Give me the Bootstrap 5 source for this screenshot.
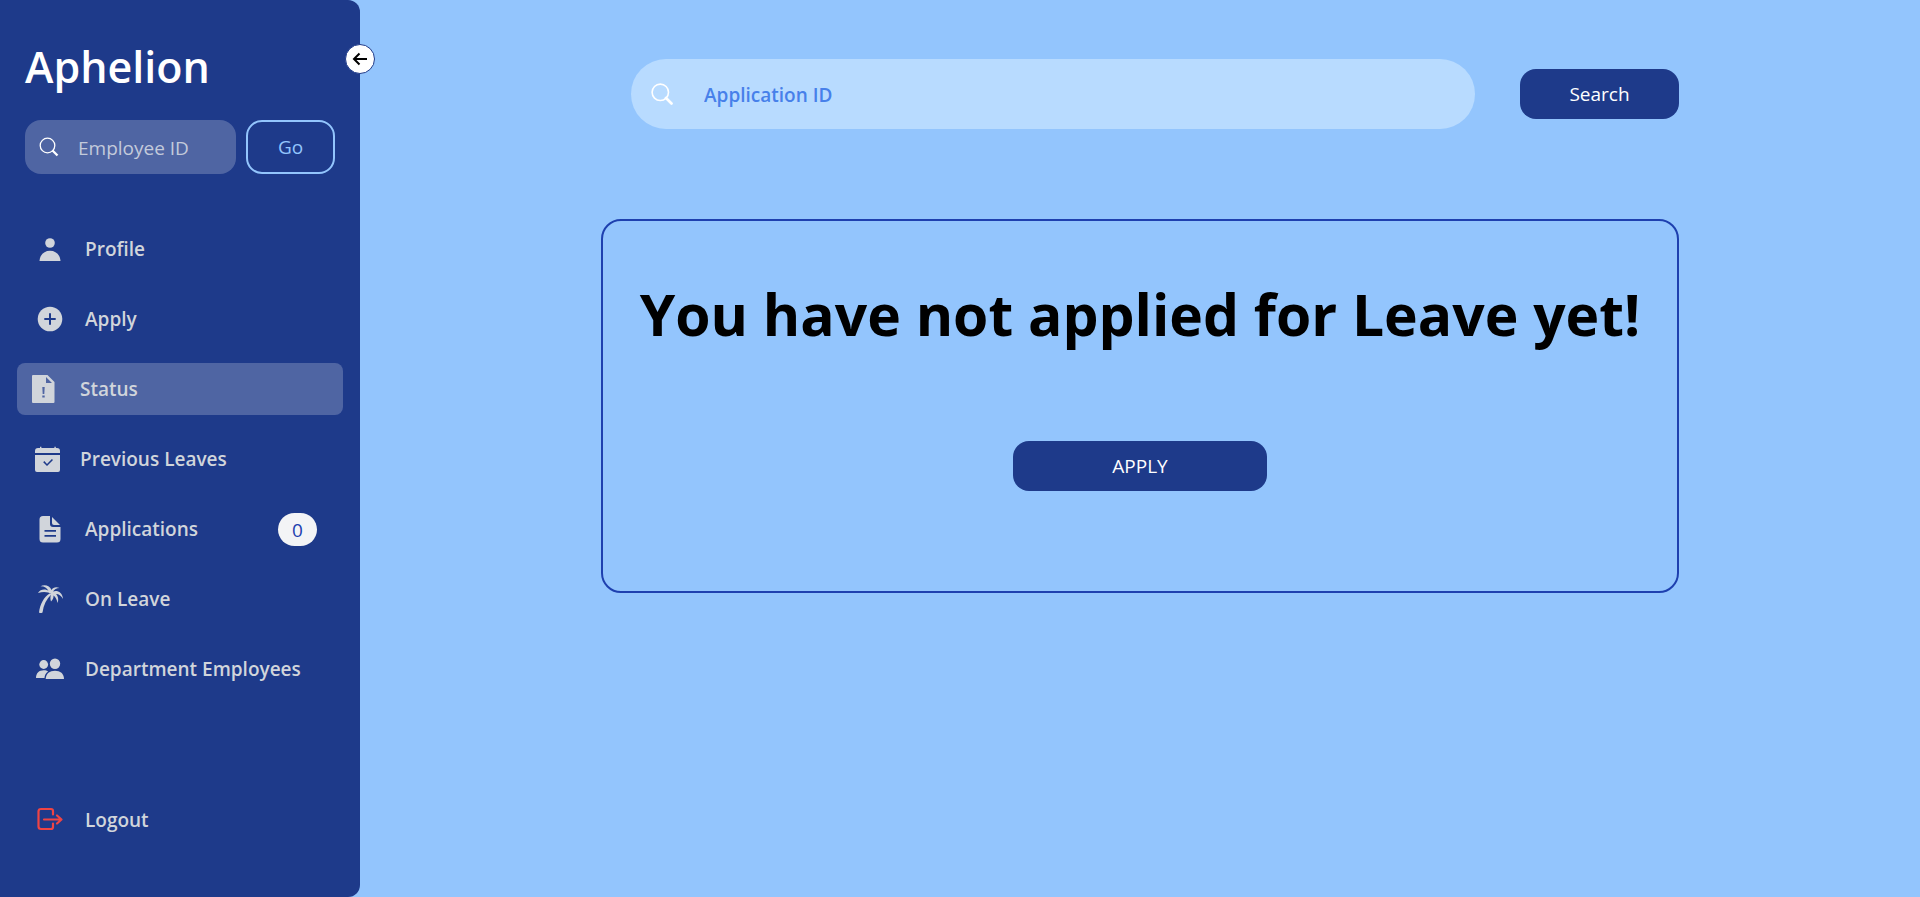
<!DOCTYPE html>
<html lang="en">
<head>
<meta charset="utf-8">
<meta name="viewport" content="width=device-width, initial-scale=1">
<title>Aphelion</title>
<link href="https://cdn.jsdelivr.net/npm/bootstrap@5.3.0/dist/css/bootstrap.min.css" rel="stylesheet">
<style>
  :root {
    --navy: #1e3a8a;
    --sky: #93c5fd;
    --soft: #d1d5db;
  }
  body {
    background: var(--sky);
    color: #000;
    font-family: "Open Sans", "Noto Sans", sans-serif;
    font-size: 19px;
    line-height: 28px;
  }
  .sidebar {
    width: 360px;
    background: var(--navy);
    border-radius: 0 12px 12px 0;
    padding: 36px 17px 51px;
  }
  .brand {
    font-size: 43px;
    line-height: 62px;
    font-weight: 600;
    padding-left: 8px;
    margin-bottom: 22px;
  }
  .toggle {
    top: 44px;
    right: -15px;
    width: 30px;
    height: 30px;
    background: #fff;
    border: 1px solid var(--navy);
  }
  .lookup { padding: 0 8px; gap: 10px; height: 54px; margin-bottom: 49px; }
  .lookup-box { background: rgba(255, 255, 255, .22); border-radius: 16px; padding: 0 14px; gap: 19px; min-width: 0; }
  .plain-input {
    background: transparent;
    border: 0;
    outline: 0;
    min-width: 0;
    padding: 2px 0 0;
    color: #fff;
  }
  .plain-input::placeholder { color: #c3cadb; opacity: 1; }
  .btn-go { width: 89px; flex: none; border: 2px solid var(--sky); border-radius: 16px; color: var(--sky); font-size: 19px; }
  .menu { gap: 18px; }
  .menu-link {
    height: 52px;
    padding: 0 26px 0 18px;
    gap: 20px;
    border-radius: 8px;
    color: var(--soft);
    font-weight: 600;
    text-decoration: none;
  }
  .menu-link.tight { padding-left: 14px; gap: 19px; }
  .menu-link.current { background: rgba(255, 255, 255, .22); }
  .menu-link svg { width: 30px; height: 30px; flex: none; }
  .count { background: #f3f4f6; color: #1e40af; width: 39px; height: 33px; line-height: 34px; font-weight: 500; }
  .content { width: 1078px; max-width: 100%; padding-top: 59px; }
  .finder { padding-left: 30px; gap: 45px; margin-bottom: 90px; }
  .finder-box { height: 70px; background: #b8dbff; padding: 0 20px; gap: 31px; }
  .finder-box .plain-input { color: #2563eb; font-weight: 600; }
  .finder-box .plain-input::placeholder { color: #4780ea; }
  .btn-navy, .btn-navy:hover { background: var(--navy); color: #fff; height: 50px; border-radius: 16px; font-size: 19px; }
  .btn-find { width: 159px; }
  .btn-apply { width: 254px; }
  .notice { border: 2px solid #1e40af; border-radius: 20px; padding: 63px 20px 100px; }
  .notice h1 { font-size: 57px; line-height: 60px; font-weight: 700; margin-bottom: 97px; }
</style>
</head>
<body>
<div class="d-flex min-vh-100">
  <aside class="sidebar position-relative d-flex flex-column flex-shrink-0">
    <button type="button" class="toggle position-absolute rounded-circle p-0 d-flex align-items-center justify-content-center" aria-label="Collapse sidebar">
      <svg width="16" height="16" viewBox="0 0 16 16" fill="none" stroke="#000" stroke-width="2"><path d="M15 8H2.500M7.500 2.500 2 8l5.500 5.500"/></svg>
    </button>
    <div class="brand text-white">Aphelion</div>
    <form class="lookup d-flex">
      <div class="lookup-box d-flex align-items-center flex-fill">
        <svg class="flex-shrink-0" width="20" height="20" viewBox="0 0 20 20" fill="none" stroke="#fff"><circle cx="8.500" cy="8.500" r="7.300" stroke-width="1.300"/><path d="M13.500 13.500l5 5" stroke-width="2.300"/></svg>
        <input class="plain-input w-100" type="text" placeholder="Employee ID" aria-label="Employee ID">
      </div>
      <button type="button" class="btn btn-go p-0">Go</button>
    </form>
    <nav class="menu d-flex flex-column">
      <a href="#" class="menu-link d-flex align-items-center">
        <svg viewBox="0 0 30 30" fill="currentColor"><circle cx="15" cy="9" r="4.800"/><path d="M4.500 27c.4-6.200 4.600-10.300 10.500-10.300S25.100 20.800 25.500 27z"/></svg>
        Profile
      </a>
      <a href="#" class="menu-link d-flex align-items-center">
        <svg viewBox="0 0 30 30"><circle cx="15" cy="15" r="12.300" fill="currentColor"/><path d="M15 9.300v11.400M9.300 15h11.400" stroke="#1e3a8a" stroke-width="2"/></svg>
        Apply
      </a>
      <a href="#" class="menu-link tight current d-flex align-items-center">
        <svg viewBox="0 0 30 30" fill="currentColor" fill-rule="evenodd"><path d="M2 1h14.500l7 7v20q0 1-1 1H2q-1 0-1-1V2q0-1 1-1zM15 3v6h6zM11.300 13h2.400l-.4 7h-1.600zM11.300 21.500h2.400v2h-2.400z"/></svg>
        Status
      </a>
      <a href="#" class="menu-link tight d-flex align-items-center">
        <svg viewBox="0 0 30 30" fill="currentColor"><path d="M4 9V7q0-3 3-3h2V2.800h1.400V4h13V2.800h1.400V4H26q3 0 3 3v2z"/><path fill-rule="evenodd" d="M4 11h25v15q0 2-2 2H6q-2 0-2-2zM12.200 18.200l3.800 3.900 6-6-1.100-1.100-4.900 4.900-2.700-2.800z"/></svg>
        Previous Leaves
      </a>
      <a href="#" class="menu-link d-flex align-items-center">
        <svg viewBox="0 0 30 30" fill="currentColor"><path d="M17 3l8 8h-6q-2 0-2-2z"/><path fill-rule="evenodd" d="M8 2h7v8q0 3 3 3h7.500v12q0 3.500-3.500 3.500H8q-3.500 0-3.500-3.500V5.500Q4.500 2 8 2zM9.500 16v1.800h11.500V16zM9.500 21v1.800h11.500V21z"/></svg>
        Applications
        <span class="count rounded-pill text-center ms-auto">0</span>
      </a>
      <a href="#" class="menu-link d-flex align-items-center">
        <svg viewBox="0 0 30 30" fill="currentColor"><path d="M4 28.500C5 20 9 13 14.500 9.500l2 .8C11.500 15 8.500 21 7.500 28.500Q5.700 29.500 4 28.500z"/><path d="M16 10C14 8 8.500 7 3 9c2-4 8-4.500 10.500-2C12 4 9 2 5.500 2.200 9 .2 15 1 16.500 6c1.500-3 5-3.600 8-2-3 .2-5.500 1.500-6.500 3.500 4-1.600 9.500.5 10 7.500-1.500-3-4-5-7-5 2 2 3 5.500 1.500 9-.6-3.500-2-6-4-7.500.2 2.200-.4 4-2.500 6-.8-2.500-.8-5 0-7.500z"/></svg>
        On Leave
      </a>
      <a href="#" class="menu-link d-flex align-items-center">
        <svg viewBox="0 0 30 30" fill="currentColor"><circle cx="8.700" cy="10.500" r="4.400"/><circle cx="20" cy="9.800" r="5.200"/><path d="M1 24c0-5 3.200-7.700 7.700-7.700 2 0 3.400.5 4.400 1.200C10.800 19 9.700 21.200 9.500 24z"/><path d="M10.700 25c.2-5.300 4-8.200 9.300-8.200s8.900 2.900 9 8.200z"/></svg>
        Department Employees
      </a>
    </nav>
    <a href="#" class="menu-link d-flex align-items-center mt-auto">
      <svg viewBox="0 0 30 30" fill="none" stroke="#ef4444" stroke-width="2.200" stroke-linecap="round" stroke-linejoin="round"><path d="M18 9.500V6q0-2-2-2H6Q3.500 4 3.500 6.500v15Q3.500 24 6 24h10q2 0 2-2v-3.500M9 14.500h17M22 10.500l4.500 4-4.500 4"/></svg>
      Logout
    </a>
  </aside>

  <main class="flex-fill d-flex justify-content-center">
    <div class="content">
      <form class="finder d-flex align-items-center">
        <div class="finder-box rounded-pill d-flex align-items-center flex-fill">
          <svg class="flex-shrink-0" width="22" height="22" viewBox="0 0 22 22" fill="none" stroke="#fff"><circle cx="9.300" cy="9.300" r="8.200" stroke-width="1.600"/><path d="M15 15l5.500 5.500" stroke-width="2.700" stroke-linecap="round"/></svg>
          <input class="plain-input w-100" type="text" placeholder="Application ID" aria-label="Application ID">
        </div>
        <button type="button" class="btn btn-navy btn-find p-0">Search</button>
      </form>
      <section class="notice text-center">
        <h1>You have not applied for Leave yet!</h1>
        <button type="button" class="btn btn-navy btn-apply p-0">APPLY</button>
      </section>
    </div>
  </main>
</div>
<script src="https://cdn.jsdelivr.net/npm/bootstrap@5.3.0/dist/js/bootstrap.bundle.min.js"></script>
</body>
</html>
